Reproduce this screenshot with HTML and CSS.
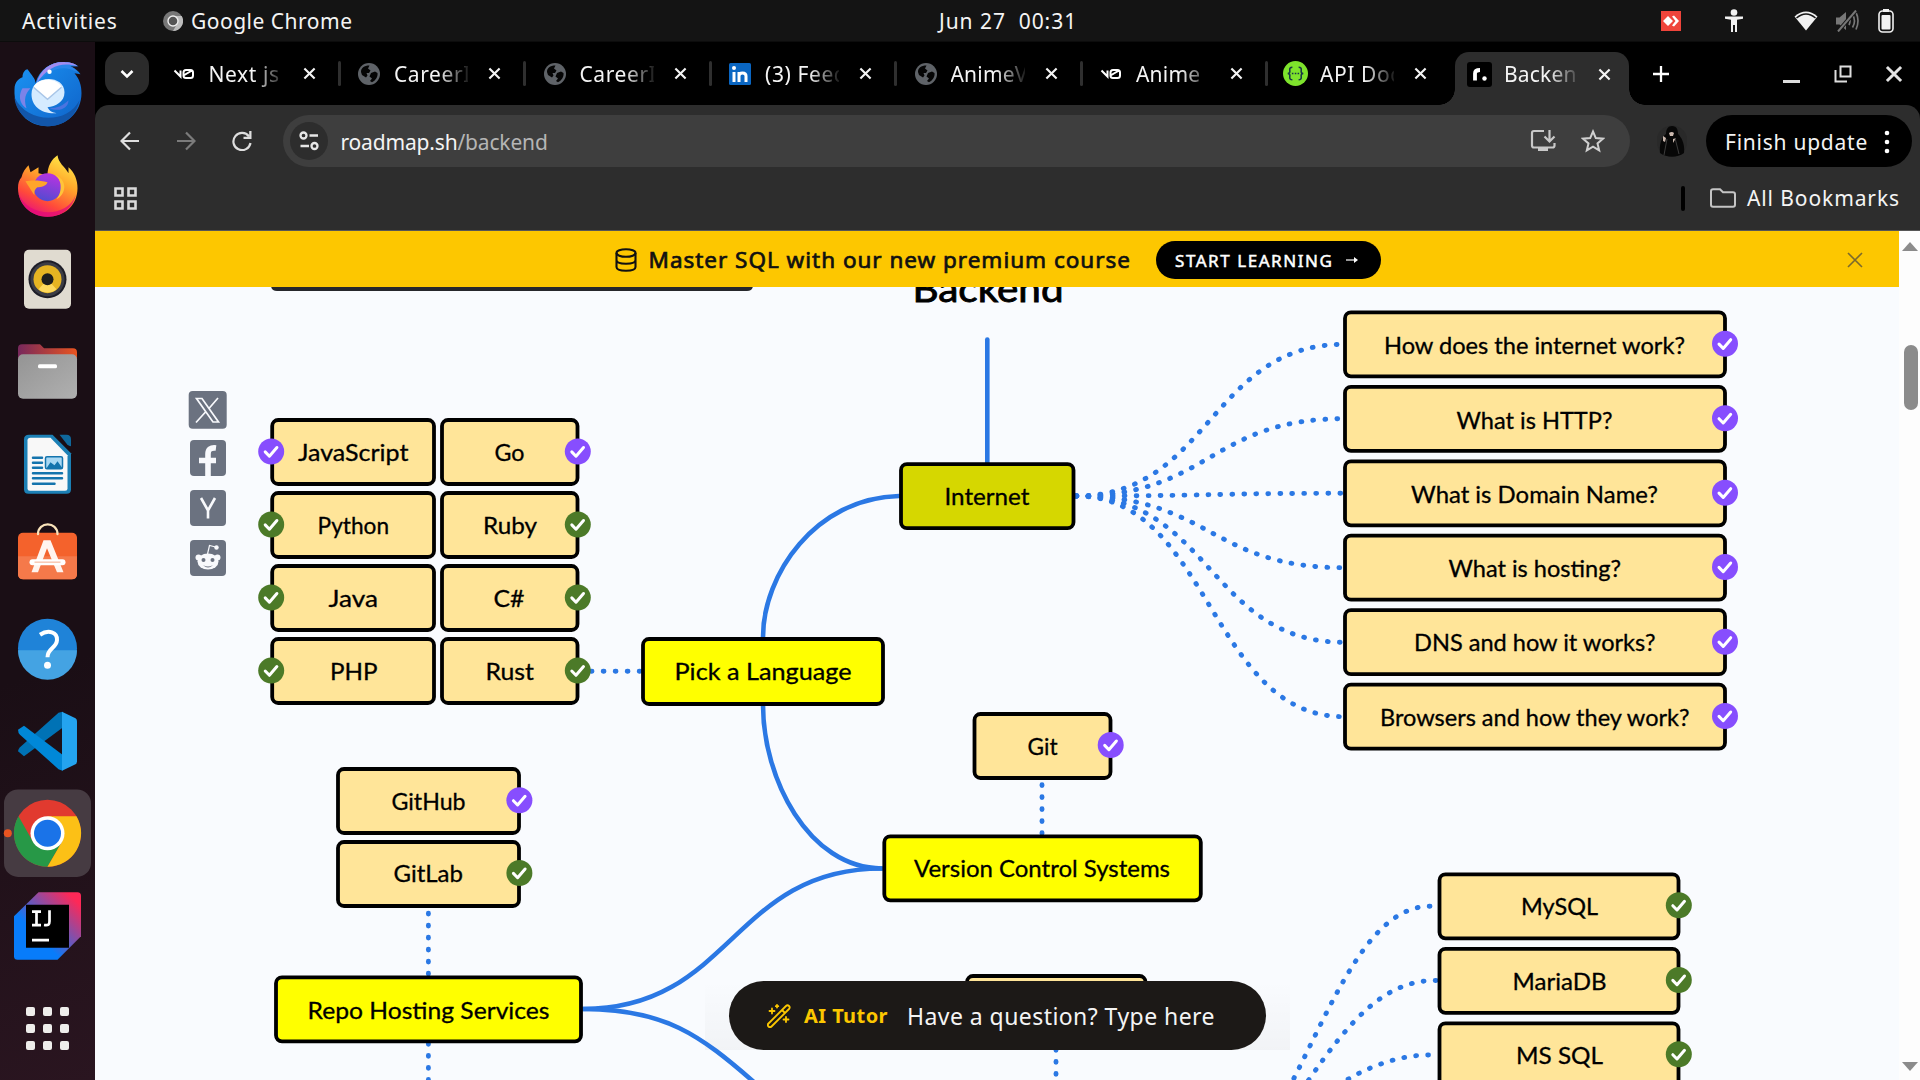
FILE: index.html
```html
<!DOCTYPE html>
<html lang="en">
<head>
<meta charset="utf-8">
<title>Backend Roadmap</title>
<link rel="stylesheet" href="styles.css">
</head>
<body>
<svg class="defs" aria-hidden="true">
  <defs>
    <symbol id="close" viewBox="0 0 14 14"><path d="M1.500 1.500l11 11M12.500 1.500l-11 11" fill="none" stroke="currentColor" stroke-width="2.300"/></symbol>
    <symbol id="globe" viewBox="0 0 22 22"><circle cx="11" cy="11" r="11" fill="#5f6368"/><path d="M3 9c0-4 3-6.500 8.500-6.500L10 5.500l2.500 2L11 10H8.500l1 2.500-1.500 2L4 12zM13 10l4-1.500 2.500 1.500c.5 4-2 7.500-5.500 9.300L12 18l2-2.500-2.500-2z" fill="#050505"/></symbol>
    <symbol id="vzero" viewBox="0 0 22 14"><path d="M1.500 3.500l6 6V3.500M10.500 9V5.500q0-2.500 2.500-2.500h4.500q2.500 0 2.500 2.500v3q0 2.500-2.500 2.500h-4.500q-2.500 0-2.500-2.500L19 3.500" fill="none" stroke="#fff" stroke-width="2"/></symbol>
    <g id="tick"><circle r="13"/><path d="M-6 .4l4.200 4.300L5.700-4" fill="none" stroke="#fff" stroke-width="3" stroke-linecap="round" stroke-linejoin="round"/></g>
  </defs>
</svg>
<div class="desktop">
  <header class="topbar">
    <span class="activities">Activities</span>
    <span class="app">
      <svg width="20" height="20" viewBox="-10 -10 20 20"><circle r="10" fill="#777"/><path d="M0-5H8.700A10 10 0 0 1 0 10L4.300 2.500z" fill="#bdbdbd"/><circle r="5" fill="#555" stroke="#eee" stroke-width="1.400"/></svg>
      <span class="appname">Google Chrome</span>
    </span>
    <span class="clock">Jun 27&nbsp; 00:31</span>
    <span class="tray">
      <svg width="20" height="20" viewBox="0 0 20 20"><path fill="#ef443b" d="M0 0h20v20H0z"/><path fill="#fff" d="M7 5l5 5-5 5-5-5zM11 5.500l2-1 5 5.500-5 5.500-2-1 3.500-4.500z"/></svg>
      <svg class="person" width="20" height="24" viewBox="0 0 20 24"><g fill="#f2f2f2"><circle cx="10" cy="3.500" r="3.300"/><path d="M1 7.500h18v2.200l-6 1V23h-2v-7H9v7H7V10.700l-6-1z"/></g></svg>
      <svg class="wifi" width="24" height="20" viewBox="0 0 24 20"><path d="M.500 5.500Q12-4.500 23.500 5.500L12 19.500z" fill="#f2f2f2"/><path d="M2.500 7Q12-1 21.500 7" fill="none" stroke="#161616" stroke-width="1.500"/></svg>
      <svg class="mute" width="24" height="22" viewBox="0 0 24 22"><g fill="none" stroke="#777" stroke-width="2"><path d="M1 7.500h3.500L11 2v18l-6.500-5.500H1z" fill="#777" stroke="none"/><path d="M14 7q2 4 0 8M17.500 4.500q4 6.500 0 13M21 2.500q4 8 0 17" stroke-width="1.700"/><path d="M3 21.500L21 .500" stroke="#161616" stroke-width="4"/><path d="M3 21.500L21 .500"/></g></svg>
      <svg class="battery" width="16" height="24" viewBox="0 0 16 24"><path d="M5 0h6v3H5z" fill="#f2f2f2"/><rect x="1" y="2" width="14" height="21" rx="3.500" fill="none" stroke="#f2f2f2" stroke-width="1.600"/><rect x="3.500" y="6" width="9" height="14.500" rx="1" fill="#f2f2f2"/></svg>
    </span>
  </header>
  <nav class="dock">
    <svg class="slot" viewBox="-47.500 -46.200 95 92.400"><defs><linearGradient id="tb" x2="1" y2="1"><stop stop-color="#1b94f4"/><stop offset="1" stop-color="#0f62c8"/></linearGradient></defs><path d="M-33-5c0-8 5-11 8-12 0-5 3-8 5-8 4 6 8 9 8 14 4-14 15-21 27-21 8 0 13 2 16 4l-8 0c5 2 8 5 10 8l-6-1c5 6 7 12 7 20C34 18 19 32 0 32S-34 18-33-5z" fill="url(#tb)"/><path d="M-33 3C-20 30 20 30 32 6 28 24 15 32 0 32S-32 20-33 3z" fill="#1256aa"/><path d="M-11-11C-7-25 4-33 18-32c6 0 10 2 12 4l-8 0c4 1 6 3 8 6-14-8-28-4-41 11z" fill="#2a86ea"/><path d="M-11-11C-7-25 4-33 18-32c6 0 10 2 12 4-14-4-28-2-41 17z" fill="#a18cf0"/><circle cx="2" cy="-22.500" r="2.200" fill="#fff"/><path d="M-25-6c-6 10 0 18 4 20-3-9-1-15 4-20z" fill="#7c83e8"/><path d="M-16 0C-16-20 17-20 17-2 17 8 8 12 0 13c2 4 5 5 9 6C-6 20-16 12-16 0z" fill="#d5ebff"/><path d="M-14-7L0 5 14-7C10-17-10-17-14-7z" fill="#fff"/><path d="M-14-7L0 5 14-7" fill="none" stroke="#a9c6e8" stroke-width="1.500"/><path d="M2 14c8 0 14-3 19-8 0 8-9 12-19 8z" fill="#4a74e0"/></svg>
    <svg class="slot" viewBox="-47.500 -46.200 95 92.400"><defs><linearGradient id="ff" x1=".8" y1="0" x2=".3" y2="1"><stop stop-color="#ffee4a"/><stop offset=".4" stop-color="#ffa52a"/><stop offset=".75" stop-color="#ff4a3a"/><stop offset="1" stop-color="#e8107e"/></linearGradient><linearGradient id="fp" x1=".6" y1="0" x2=".3" y2="1"><stop stop-color="#b833e1"/><stop offset="1" stop-color="#514bd0"/></linearGradient></defs><path d="M-26-9c1-5 4-9 7-12l2 7 8-5v6l9 2c0-9 4-16 10-20 1 8 7 11 11 18l0-6c6 5 9 13 9 21C30 19 17 30.500 0 30.500S-29.500 18-29.500 2c0-5 1-8 3.500-11z" fill="url(#ff)"/><path d="M-29 7C-20 32 20 32 28 9 25 23 13 30.500 0 30.500S-26 22-29 7z" fill="#e30b79" opacity=".75"/><circle cy="1" r="14" fill="url(#fp)"/><path d="M-22-5c6-1 15-1 22 1-1 4-7 5-10 5-4 3-3 6-3 8-4-6-6-9-9-14z" fill="#ffa52a"/><path d="M6-12c9 4 9 18 3 25 10-5 12-20-3-25z" fill="#ffc43a"/></svg>
    <svg class="slot" viewBox="-47.500 -46.200 95 92.400"><rect x="-23.500" y="-29.500" width="47" height="59" rx="5" fill="#e0dbd0"/><circle r="19" fill="#1d1d27"/><circle r="17" fill="#3c3d46"/><circle r="14" fill="#e6b422"/><path d="M-9 10A14 14 0 0 0 9 10L0 0z" fill="#ffd95c"/><circle r="6" fill="#1e1e1e"/></svg>
    <svg class="slot" viewBox="-47.500 -46.200 95 92.400"><defs><linearGradient id="fo"><stop stop-color="#77285c"/><stop offset="1" stop-color="#e95420"/></linearGradient><linearGradient id="fg" x2="1" y2="1"><stop stop-color="#949494"/><stop offset="1" stop-color="#b0b0b0"/></linearGradient></defs><path d="M-29.500 0v-23q0-4 4-4h18l4 4h29q4 0 4 4V0z" fill="url(#fo)"/><rect x="-29.500" y="-17" width="59" height="44.500" rx="5" fill="url(#fg)"/><rect x="-9.500" y="-7" width="19" height="4" rx="1.500" fill="#fff"/></svg>
    <svg class="slot" viewBox="-47.500 -46.200 95 92.400"><path d="M-18.500-29.500H5L23.500-11v36q0 4.500-4.500 4.500h-38q-4.500 0-4.500-4.500v-50q0-4.500 5-4.500z" fill="#1c80b5"/><path d="M-17-26.500H3L20-9v33q0 2.500-2.500 2.500h-35q-2.500 0-2.500-2.500v-48q0-2.500 3-2.500z" fill="#f8f8f8"/><path d="M12-29.500h7q4.500 0 4.500 4.500v7q-2 0-4-2z" fill="#0f689c"/><g fill="none" stroke="#1474ad" stroke-width="2.500" stroke-linecap="round"><path d="M-14.500-6.500h9M-14.500-1.500h9M-14.500 3.500h9M-14.500 9h29M-14.500 14h29M-14.500 19.500H7"/></g><rect x="-2" y="-7.500" width="17" height="12" rx="1.500" fill="#a9d8f3" stroke="#1474ad" stroke-width="1.500"/><path d="M-1 4l4-6 4 3 3-4 5 7z" fill="#1474ad"/></svg>
    <svg class="slot" viewBox="-47.500 -46.200 95 92.400"><rect x="-29.500" y="-23.500" width="59" height="46.500" rx="5" fill="#f4622c"/><path d="M-29.500 0h59v18q0 5-5 5h-49q-5 0-5-5z" fill="#f5794a"/><path d="M-9.500-22c0-13 19.500-13 19.500 0" fill="none" stroke="#fae3ba" stroke-width="2.200" stroke-linecap="round"/><path d="M-4-16h7l13 32h-6.500L-.500-8-9.500 16h-6.500z" fill="#fff4ef"/><rect x="-18" y="3" width="36" height="6" rx="3" fill="#fff"/><path d="M-13 6h26" stroke="#f8c8b3" stroke-width="1.500"/></svg>
    <svg class="slot" viewBox="-47.500 -46.200 95 92.400"><circle r="29.500" fill="#1f83d8"/><path d="M-29.500 2h59A29.500 29.500 0 0 1-29.500 2z" fill="#44a3e3"/><path d="M-7.500-13.500C1-19 10-16 9.500-8 9 0 0 0 0 9" fill="none" stroke="#fff" stroke-width="4"/><circle cy="17" r="3.500" fill="#fff"/></svg>
    <svg class="slot" viewBox="-47.500 -46.200 95 92.400"><path d="M15-29.500v16L-23.500 15l-6-5q0-2 2-4L11-28.500z" fill="#0072b5"/><path d="M15 29.500v-16L-23.500-15.500l-6 4q0 3 2 5L11 28z" fill="#0088d8"/><path d="M14.500-29.500L28-23q1.500 1 1.500 3v40q0 2-1.500 3L14.500 29.500z" fill="#24a4ef"/></svg>
    <svg class="slot" viewBox="-47.500 -46.200 95 92.400"><rect x="-43.500" y="-43.700" width="87" height="87.400" rx="14" fill="#463b42"/><circle cx="-39.700" r="4" fill="#e95420"/><circle r="33.500" fill="#e13a2f"/><path d="M-29-17A33.500 33.500 0 0 0 0 33.500L14.500 8.500-14.500 8.500z" fill="#279847"/><path d="M29-17A33.500 33.500 0 0 1 0 33.500L14.500 8.500 0-17z" fill="#fcc016"/><circle r="17" fill="#fff"/><circle r="13.500" fill="#1a73e8"/></svg>
    <svg class="slot" viewBox="-47.500 -46.200 95 92.400"><defs><linearGradient id="ij" x1="1" y1="0" x2="0" y2="1"><stop offset=".1" stop-color="#fe2857"/><stop offset=".45" stop-color="#6b57ba"/><stop offset=".65" stop-color="#087cfa"/></linearGradient></defs><path d="M-9-34h39q3.500 0 3.500 3.500V10L10 33.500h-40q-3.500 0-3.500-3.500v-40z" fill="url(#ij)"/><path d="M-21.500-21.500h43v43h-43z"/><g fill="none" stroke="#fff" stroke-width="2.700"><path d="M-15.500-14.500h9M-11-14.500V0M-15.500-1h9M-3.500-1.200C1-.5 2-1.500 2-5v-11M-15.500 14H1.500"/></g></svg>
    <div class="apps"><i></i><i></i><i></i><i></i><i></i><i></i><i></i><i></i><i></i></div>
  </nav>
  <main class="window">
    <div class="tabs">
      <button class="search"><svg width="16" height="12" viewBox="0 0 16 12"><path d="M2.500 3L8 8.500 13.500 3" fill="none" stroke="#fff" stroke-width="2.600"/></svg></button>
      <div class="tab"><svg class="fav"><use href="#vzero"/></svg><span class="title">Next js</span><svg class="x"><use href="#close"/></svg></div>
      <div class="tab"><svg class="fav"><use href="#globe"/></svg><span class="title">CareerI</span><svg class="x"><use href="#close"/></svg></div>
      <div class="tab"><svg class="fav"><use href="#globe"/></svg><span class="title">CareerI</span><svg class="x"><use href="#close"/></svg></div>
      <div class="tab"><svg class="fav" viewBox="0 0 22 22"><rect width="22" height="22" rx="1.500" fill="#0a66c2"/><g fill="none" stroke="#fff" stroke-width="3"><path d="M5 9v10M10 9v10M10 13q0-3 3.500-3t3.500 3v6"/></g><circle cx="5" cy="5" r="2" fill="#fff"/></svg><span class="title">(3) Feed</span><svg class="x"><use href="#close"/></svg></div>
      <div class="tab"><svg class="fav"><use href="#globe"/></svg><span class="title tight">AnimeV</span><svg class="x"><use href="#close"/></svg></div>
      <div class="tab"><svg class="fav"><use href="#vzero"/></svg><span class="title tight">Anime</span><svg class="x"><use href="#close"/></svg></div>
      <div class="tab last"><svg class="fav big" viewBox="0 0 24 24"><circle cx="12" cy="12" r="12" fill="#7ee32c"/><path d="M9 6q-3 0-2.500 3T4.500 12q2.500 0 2 3T9 18M15 6q3 0 2.500 3t2 3q-2.500 0-2 3T15 18M8.500 12h1.500M11.300 12h1.500M14 12h1.500" fill="none" stroke="#173647" stroke-width="1.500"/></svg><span class="title">API Doc</span><svg class="x"><use href="#close"/></svg></div>
      <div class="tab active"><svg class="fav big" viewBox="0 0 25 25"><rect width="25" height="25" rx="3"/><path d="M8 18.500v-7q0-3.500 5-3.500" fill="none" stroke="#fff" stroke-width="3.800"/><circle cx="17.500" cy="16.500" r="2.200" fill="#fff"/></svg><span class="title tight">Backend</span><svg class="x"><use href="#close"/></svg></div>
      <svg class="plus" width="16" height="16" viewBox="0 0 16 16"><path d="M8 0v16M0 8h16" stroke="#fff" stroke-width="2.300"/></svg>
      <div class="controls">
        <svg width="18" height="20" viewBox="0 0 18 20"><path d="M0 17.500h17" stroke="#ddd" stroke-width="3"/></svg>
        <svg width="18" height="18" viewBox="0 0 18 18"><g fill="none" stroke="#ddd" stroke-width="2"><path d="M6.500 1.500h10v10h-10z"/><path d="M1.500 5v11.500H13"/></g></svg>
        <svg width="18" height="18" viewBox="0 0 14 14"><use href="#close"/></svg>
      </div>
    </div>
    <div class="toolbar">
      <div class="row">
        <svg class="nav" viewBox="0 0 20 20"><path d="M19 10H2M10 1.500L1.500 10l8.500 8.500" fill="none" stroke="#dedede" stroke-width="2.200"/></svg>
        <svg class="nav" viewBox="0 0 20 20"><path d="M1 10h17M10 1.500l8.500 8.500-8.500 8.500" fill="none" stroke="#7b7b7b" stroke-width="2.200"/></svg>
        <svg class="nav" viewBox="0 0 20 20"><path d="M17 5.500A8.600 8.600 0 1 0 18.500 12" fill="none" stroke="#dedede" stroke-width="2.200"/><path d="M19.500 0v8h-8v-2.200h5.700V0z" fill="#dedede"/></svg>
        <div class="omnibox">
          <span class="site"><svg width="20" height="20" viewBox="0 0 20 20"><g fill="none" stroke="#e6e6e6" stroke-width="2.300"><circle cx="4.500" cy="4.500" r="3"/><path d="M10.500 4.500H19M1.500 15H10"/><circle cx="15.500" cy="15" r="3"/></g></svg></span>
          <span class="url">roadmap.sh<b>/backend</b></span>
          <svg class="install" width="26" height="24" viewBox="0 0 26 24"><g fill="none" stroke="#c9c9c9" stroke-width="2.200"><path d="M14 2H4Q2 2 2 4v12.500q0 2 2 2h18.500q2 0 2-2V14M19.500 1v11M14.500 7.500l5 5 5-5"/></g><path d="M8 18h10v4H8z" fill="#c9c9c9"/></svg>
          <svg width="24" height="24" viewBox="0 0 24 24"><path d="M12 2.500l2.800 6.600 7.200.600-5.500 4.700 1.700 7L12 17.700l-6.200 3.700 1.700-7L2 9.700l7.200-.6z" fill="none" stroke="#d0d0d0" stroke-width="2"/></svg>
        </div>
        <svg class="avatar" width="30" height="32" viewBox="0 0 30 32"><circle cx="15" cy="16" r="15.500" fill="#292929"/><path d="M15 1c5 0 6 4 6 8 4 4 7 10 6 19-7 5-17 5-24 0C2 19 5 12 9 9c0-5 2-8 6-8z" fill="#070707"/><path d="M12 8q3-2 5 0l-1 3h-3zM6 11l3 2-1 4-2-1zM16 14l3-1-3 5z" fill="#cbb8ae"/><path d="M10 14l-3 16M18 13l4 16" stroke="#3c3c3c" fill="none"/></svg>
        <div class="update"><span>Finish update</span><svg width="6" height="24" viewBox="0 0 6 24"><g fill="#fff"><circle cx="3" cy="3" r="2.300"/><circle cx="3" cy="12" r="2.300"/><circle cx="3" cy="21" r="2.300"/></g></svg></div>
      </div>
      <div class="bookmarks">
        <svg width="23" height="23" viewBox="0 0 23 23"><g fill="none" stroke="#dadada" stroke-width="2.600"><path d="M1.500 1.500h7v7h-7zM14.500 1.500h7v7h-7zM1.500 14.500h7v7h-7zM14.500 14.500h7v7h-7z"/></g></svg>
        <i class="divider"></i>
        <svg class="folder" width="26" height="20" viewBox="0 0 26 20"><path d="M3 1.200h7l3 3h10q2 0 2 2v10.600q0 2-2 2H3q-2 0-2-2V3.200q0-2 2-2z" fill="none" stroke="#c4c4c4" stroke-width="2"/></svg>
        <span class="all">All Bookmarks</span>
      </div>
    </div>
    <div class="view">
      <div class="page">
        <div class="banner">
          <svg width="22" height="24" viewBox="0 0 22 24"><g fill="none" stroke="#111" stroke-width="2.100"><ellipse cx="11" cy="5" rx="9.500" ry="3.800"/><path d="M1.500 5v14c0 5 19 5 19 0V5M1.500 12c0 5 19 5 19 0"/></g></svg>
          <span class="offer">Master SQL with our new premium course</span>
          <span class="cta"><span>START LEARNING</span><svg width="12" height="8" viewBox="0 0 12 8"><path d="M0 4h10" stroke="#fff" stroke-width="1.200"/><path d="M8 1l4 3-4 3z" fill="#fff"/></svg></span>
          <svg class="dismiss" width="16" height="16" viewBox="0 0 16 16"><path d="M1 1l14 14M15 1L1 15" stroke="#7b6a2d" stroke-width="1.600"/></svg>
        </div>
        <svg class="map" viewBox="95 287 1804 793">
          <path d="M271 280H753V285q0 6-6 6H277q-6 0-6-6z" fill="#26272b"/>
          <g fill="#6b7280">
            <rect x="188.700" y="391" width="38" height="37.700" rx="4"/>
            <rect x="190" y="440" width="36" height="36" rx="4"/>
            <rect x="190" y="490" width="36" height="36" rx="4"/>
            <rect x="190" y="540" width="36" height="36" rx="4"/>
          </g>
          <g fill="none" stroke="#f8f9fc">
            <path d="M196.500 398.500h5.500l16.500 23.500h-5.500zM218 398l-9.500 11M205.500 412l-9.500 10.500" stroke-width="1.700"/>
            <path d="M208 476v-22q0-7 8-6M199 460.500h17" stroke-width="5.600"/>
            <path d="M201 498l7 12.500 7-12.500M208 510v8.500" stroke-width="2.600"/>
            <path d="M207.500 554l2-8.500 6 1.500" stroke-width="1.200"/>
          </g>
          <g fill="#f8f9fc"><ellipse cx="208" cy="561.500" rx="10.500" ry="8"/><circle cx="198.500" cy="557.500" r="3"/><circle cx="217.500" cy="557.500" r="3"/><circle cx="216.500" cy="547.500" r="2.200"/></g>
          <g fill="#6b7280"><circle cx="203.500" cy="560" r="2"/><circle cx="212.500" cy="560" r="2"/><path d="M203 565q5 3 10 0-5 5-10 0z"/></g>

          <g class="link">
            <path d="M987.300 339.500V463"/>
            <path d="M899 496C815 498 763 575 763 637"/>
            <path d="M763 705C763 778 808 868 882 868.500"/>
            <path d="M583 1009C732 1009 732 868.500 882 868.500"/>
            <path d="M583 1009C665 1009 700 1035 755 1083"/>
          </g>
          <g class="link dotted">
            <path d="M1076 496C1210 496 1210 344.300 1344 344.300"/>
            <path d="M1076 496C1210 496 1210 418.700 1344 418.700"/>
            <path d="M1076 496C1210 496 1210 493.300 1344 493.300"/>
            <path d="M1076 496C1210 496 1210 567.700 1344 567.700"/>
            <path d="M1076 496C1210 496 1210 642.300 1344 642.300"/>
            <path d="M1076 496C1210 496 1210 716.700 1344 716.700"/>
            <path d="M640 671.300H580"/>
            <path d="M428.400 974V908"/>
            <path d="M428.400 1043.500V1090"/>
            <path d="M1042 833.500V781"/>
            <path d="M1056 1049.500V1090"/>
            <path d="M1430 906.300C1370 906 1334 1000 1293 1080"/>
            <path d="M1436 980.500C1385 980 1350 1020 1308 1081"/>
            <path d="M1428.500 1055C1398 1055 1365 1068 1342 1083"/>
          </g>

          <g class="node">
            <rect x="272.200" y="420" width="161.800" height="64" rx="6"/><rect x="442" y="420" width="135.500" height="64" rx="6"/>
            <rect x="272.200" y="493" width="161.800" height="64" rx="6"/><rect x="442" y="493" width="135.500" height="64" rx="6"/>
            <rect x="272.200" y="566" width="161.800" height="64" rx="6"/><rect x="442" y="566" width="135.500" height="64" rx="6"/>
            <rect x="272.200" y="639" width="161.800" height="64" rx="6"/><rect x="442" y="639" width="135.500" height="64" rx="6"/>
            <rect x="338" y="769" width="181" height="64" rx="6"/><rect x="338" y="842" width="181" height="64" rx="6"/>
            <rect x="974.500" y="714" width="136" height="64" rx="6"/><rect x="967" y="976" width="178.500" height="64" rx="6"/>
            <rect x="1345" y="312.300" width="380" height="64" rx="6"/><rect x="1345" y="386.800" width="380" height="64" rx="6"/>
            <rect x="1345" y="461.300" width="380" height="64" rx="6"/><rect x="1345" y="535.700" width="380" height="64" rx="6"/>
            <rect x="1345" y="610.200" width="380" height="64" rx="6"/><rect x="1345" y="684.700" width="380" height="64" rx="6"/>
            <rect x="1439.500" y="874.300" width="239" height="64" rx="6"/><rect x="1439.500" y="948.800" width="239" height="64" rx="6"/><rect x="1439.500" y="1023.300" width="239" height="64" rx="6"/>
            <g class="key">
              <rect x="643" y="639" width="240" height="65" rx="6"/>
              <rect x="884.300" y="836.300" width="316.500" height="64" rx="6"/>
              <rect x="276" y="977.300" width="305" height="64" rx="6"/>
            </g>
            <rect class="learning" x="901" y="464.200" width="172.500" height="64" rx="6"/>
          </g>

          <g class="text">
            <text class="heading" x="912.500" y="302" textLength="151" lengthAdjust="spacingAndGlyphs">Backend</text>
            <text x="298" y="461" textLength="110.400" lengthAdjust="spacingAndGlyphs">JavaScript</text>
            <text x="494.500" y="461" textLength="30" lengthAdjust="spacingAndGlyphs">Go</text>
            <text x="317.600" y="533.700" textLength="71.500" lengthAdjust="spacingAndGlyphs">Python</text>
            <text x="483" y="533.700" textLength="54" lengthAdjust="spacingAndGlyphs">Ruby</text>
            <text x="328.500" y="607.300" textLength="49.500" lengthAdjust="spacingAndGlyphs">Java</text>
            <text x="493.500" y="607.300" textLength="31" lengthAdjust="spacingAndGlyphs">C#</text>
            <text x="330" y="679.500" textLength="47.500" lengthAdjust="spacingAndGlyphs">PHP</text>
            <text x="485.500" y="679.500" textLength="48.500" lengthAdjust="spacingAndGlyphs">Rust</text>
            <text x="674.500" y="680" textLength="177" lengthAdjust="spacingAndGlyphs">Pick a Language</text>
            <text x="391.500" y="809.700" textLength="74" lengthAdjust="spacingAndGlyphs">GitHub</text>
            <text x="393.500" y="882.300" textLength="69.500" lengthAdjust="spacingAndGlyphs">GitLab</text>
            <text x="307.500" y="1018.700" textLength="242" lengthAdjust="spacingAndGlyphs">Repo Hosting Services</text>
            <text x="944.500" y="504.700" textLength="85" lengthAdjust="spacingAndGlyphs">Internet</text>
            <text x="1027.500" y="754.700" textLength="30" lengthAdjust="spacingAndGlyphs">Git</text>
            <text x="914" y="877.300" textLength="256" lengthAdjust="spacingAndGlyphs">Version Control Systems</text>
            <text x="1384" y="353.700" textLength="301" lengthAdjust="spacingAndGlyphs">How does the internet work?</text>
            <text x="1456.500" y="428.700" textLength="156" lengthAdjust="spacingAndGlyphs">What is HTTP?</text>
            <text x="1411" y="502.700" textLength="247" lengthAdjust="spacingAndGlyphs">What is Domain Name?</text>
            <text x="1448.500" y="577.300" textLength="172.500" lengthAdjust="spacingAndGlyphs">What is hosting?</text>
            <text x="1414" y="651" textLength="241.500" lengthAdjust="spacingAndGlyphs">DNS and how it works?</text>
            <text x="1380" y="726" textLength="309.500" lengthAdjust="spacingAndGlyphs">Browsers and how they work?</text>
            <text x="1521" y="915" textLength="77" lengthAdjust="spacingAndGlyphs">MySQL</text>
            <text x="1512.500" y="990" textLength="94" lengthAdjust="spacingAndGlyphs">MariaDB</text>
            <text x="1516" y="1063.700" textLength="87" lengthAdjust="spacingAndGlyphs">MS SQL</text>
          </g>

          <g fill="#874efe">
            <use href="#tick" x="271.200" y="451.500"/><use href="#tick" x="577.800" y="451.500"/><use href="#tick" x="519.400" y="800.300"/><use href="#tick" x="1110.700" y="745"/>
            <use href="#tick" x="1725" y="343.700"/><use href="#tick" x="1725" y="418.300"/><use href="#tick" x="1725" y="492.700"/><use href="#tick" x="1725" y="567"/><use href="#tick" x="1725" y="641.700"/><use href="#tick" x="1725" y="716"/>
          </g>
          <g fill="#4c7a28">
            <use href="#tick" x="271.200" y="524.500"/><use href="#tick" x="271.200" y="597.500"/><use href="#tick" x="271.200" y="670.600"/>
            <use href="#tick" x="577.800" y="524.500"/><use href="#tick" x="577.800" y="597.500"/><use href="#tick" x="577.800" y="670.600"/>
            <use href="#tick" x="519.400" y="873"/><use href="#tick" x="1678.800" y="905.300"/><use href="#tick" x="1678.800" y="980"/><use href="#tick" x="1678.800" y="1054.300"/>
          </g>
        </svg>
        <div class="tutor">
          <svg width="24" height="24" viewBox="0 0 24 24"><g fill="none" stroke="#fcc700" stroke-width="1.800" stroke-linecap="round" stroke-linejoin="round"><path d="M1.500 19.500L19 2q1.500-1.500 3 0t0 3L4.500 22.500q-1.500 1.500-3 0t0-3zM15 6l3 3M5 4.500v5M2.500 7h5M10 1v2.500M8.800 2.200h2.500M19 13v5M16.500 15.500h5"/></g></svg>
          <b>AI Tutor</b><span>Have a question? Type here</span>
        </div>
      </div>
      <div class="scroll"><i class="up"></i><i class="thumb"></i><i class="down"></i></div>
    </div>
  </main>
</div>
</body>
</html>
```
FILE: styles.css
```css
* { box-sizing: border-box; }
body { margin: 0; background: #000; overflow: hidden; font-family: "Noto Sans", "Open Sans", sans-serif; color: #f4f4f4; }
svg { flex: none; display: block; }
.defs { width: 0; height: 0; position: absolute; }
.desktop { width: 1920px; height: 1080px; display: grid; grid-template: 42px 1fr / 95px 1fr; }

.topbar { grid-column: 1 / 3; background: #141414; display: grid; grid-template-columns: 163px 776px auto 1fr; align-items: center; font-size: 21px; white-space: nowrap; border-bottom: 1px solid #0c0c0c; }
.activities { padding-left: 22px; letter-spacing: .8px; }
.app { display: flex; align-items: center; gap: 8px; letter-spacing: .5px; }
.clock { letter-spacing: .95px; }
.tray { display: flex; align-items: center; justify-content: flex-end; padding-right: 26px; }
.person { margin-left: 43px; }
.wifi { margin-left: 50px; }
.mute { margin-left: 17px; }
.battery { margin-left: 19px; }

.dock { background: linear-gradient(160deg, #1a0e15 60%, #2a1520); padding-top: 6px; display: flex; flex-direction: column; }
.slot { width: 95px; height: 92.4px; }
.apps { display: grid; grid-template-columns: repeat(3, 9px); gap: 8px; margin: 35px 0 0 26px; }
.apps i { width: 9px; height: 9px; border-radius: 2px; background: #eeedeb; }

.window { display: flex; flex-direction: column; min-width: 0; min-height: 0; }
.tabs { height: 63px; display: flex; align-items: center; padding-left: 10px; }
.search { width: 44px; height: 43px; border: 0; border-radius: 14px; background: #2b2b2b; display: flex; align-items: center; justify-content: center; padding: 0; margin-right: 5px; }
.tab { width: 185.5px; height: 63px; display: flex; align-items: center; padding-left: 18.5px; position: relative; }
.tab:not(.last):not(.active)::after { content: ""; position: absolute; right: -1px; top: 19px; width: 3px; height: 25px; border-radius: 2px; background: #2f2f2f; }
.tab.last { width: 186px; padding-left: 17px; }
.fav { width: 22px; height: 22px; }
.big { width: 25px; height: 25px; margin: 0 -1.5px; }
.title { width: 74px; margin-left: 14px; font-size: 21px; letter-spacing: .6px; white-space: nowrap; overflow: hidden; -webkit-mask-image: linear-gradient(90deg, #000 60%, transparent 105%); mask-image: linear-gradient(90deg, #000 60%, transparent 105%); }
.tight { letter-spacing: .2px; }
.x { width: 13px; height: 13px; margin-left: 20px; }
.tab.active { width: 174px; height: 53px; margin: 10px 0 0 2px; padding: 0 0 9px 13px; background: #2d2d2d; border-radius: 14px 14px 0 0; }
.active::before, .active::after { content: ""; position: absolute; bottom: 0; width: 16px; height: 16px; }
.active::before { left: -16px; background: radial-gradient(circle at 0 0, transparent 15.5px, #2d2d2d 16px); }
.active::after { right: -16px; background: radial-gradient(circle at 100% 0, transparent 15.5px, #2d2d2d 16px); }
.plus { margin-left: 24px; }
.controls { margin-left: auto; display: flex; align-items: center; gap: 33px; padding-right: 17px; color: #e4e4e4; }

.toolbar { height: 126px; background: #2d2d2d; border-bottom: 1px solid #565656; border-radius: 14px 14px 0 0; padding-top: 10px; }
.row { display: flex; align-items: center; height: 52px; padding-left: 24.5px; }
.nav { width: 20px; height: 20px; margin-right: 36px; }
.omnibox { width: 1347px; height: 52px; border-radius: 26px; background: #3e3e3e; display: flex; align-items: center; padding: 0 25px 0 7px; margin-left: -5px; }
.site { width: 38px; height: 38px; border-radius: 50%; background: #2d2d2d; display: flex; align-items: center; justify-content: center; }
.url { margin-left: 13px; font-size: 21px; letter-spacing: -.17px; flex: 1; padding-top: 2px; }
.url b { font-weight: 400; color: #b5b5b5; }
.install { margin-right: 25px; }
.avatar { margin-left: 27px; }
.update { margin-left: 19.5px; width: 206px; height: 52px; border-radius: 26px; background: #000; display: flex; align-items: center; padding: 2px 22px 0 19px; justify-content: space-between; font-size: 21px; letter-spacing: .75px; white-space: nowrap; }
.bookmarks { display: flex; align-items: center; height: 42px; margin-top: 10px; padding: 0 20px 0 19px; font-size: 21px; }
.all { letter-spacing: .9px; margin-top: -1px; }
.divider { width: 4px; height: 25px; border-radius: 2px; background: #000; margin-left: auto; margin-right: 25px; }
.folder { margin-right: 11px; }

.view { flex: 1; min-height: 0; display: flex; }
.page { width: 1804px; position: relative; background: #f9fbfe; overflow: hidden; isolation: isolate; }
.banner { height: 56px; background: #fdc700; display: flex; align-items: center; padding: 2px 0 0 520px; color: #111; white-space: nowrap; }
.offer { font-size: 22.5px; letter-spacing: .98px; -webkit-text-stroke: .7px #111; margin: -1px 0 0 11.5px; width: 482.5px; }
.cta { margin-left: 25px; width: 225px; height: 38px; border-radius: 19px; background: #000; color: #fff; font-size: 17px; letter-spacing: 1.55px; -webkit-text-stroke: .5px #fff; display: flex; align-items: center; padding: 0 23px 0 19px; justify-content: space-between; }
.dismiss { margin-left: 466px; }
.map { width: 1804px; height: 793px; }
.link path { fill: none; stroke: #2b78e4; stroke-width: 4.6; stroke-linecap: round; }
.link.dotted path { stroke-dasharray: .8 11.2; stroke-width: 4.9; }
.node rect { fill: #ffe599; stroke: #000; stroke-width: 3.8; }
.node .key rect { fill: #ff0; }
.node .learning { fill: #d6d700; }
.text { font: 23px Lato, "Open Sans", sans-serif; fill: #000; stroke: #000; stroke-width: .3px; }
.heading { font-size: 37px; stroke-width: .9px; }
.tutor { position: absolute; left: 634px; top: 750px; width: 537px; height: 69px; border-radius: 35px; background: #1c1917; display: flex; align-items: center; padding-left: 38px; white-space: nowrap; font-size: 23px; letter-spacing: .44px; }
.tutor::before { content: ""; position: absolute; z-index: -1; inset: 0 -24px; background: linear-gradient(#0000, #00000008); }
.tutor b { color: #fcc700; font-size: 20px; margin-left: 13px; width: 103px; }
.scroll { width: 21px; background: #fdfdfd; position: relative; display: flex; flex-direction: column; align-items: center; justify-content: space-between; padding: 11px 0 9px; }
.up, .down { border: 8px solid transparent; border-top: 0; border-bottom: 9px solid #8b8b8b; }
.down { transform: rotate(180deg); }
.thumb { position: absolute; left: 5px; top: 114px; width: 14px; height: 65px; border-radius: 7px; background: #8b8b8b; }
```
